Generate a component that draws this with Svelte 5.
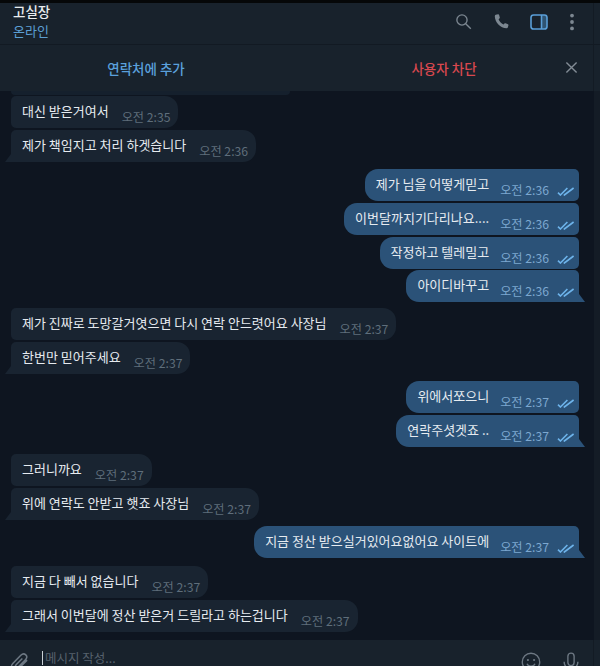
<script>
  // 대화 내용: out = 내가 보낸 메시지, gap = 이전 메시지와의 간격, tail = 꼬리 표시
  const messages = [
    { text: "대신 받은거여서", time: "오전 2:35", gap: 1 },
    { text: "제가 책임지고 처리 하겟습니다", time: "오전 2:36", gap: 2, tail: true },
    { text: "제가 님을 어떻게믿고", time: "오전 2:36", out: true, gap: 7 },
    { text: "이번달까지기다리나요....", time: "오전 2:36", out: true, gap: 2 },
    { text: "작정하고 텔레밀고", time: "오전 2:36", out: true, gap: 2 },
    { text: "아이디바꾸고", time: "오전 2:36", out: true, gap: 1, tail: true },
    { text: "제가 진짜로 도망갈거엿으면 다시 연락 안드렷어요 사장님", time: "오전 2:37", gap: 6 },
    { text: "한번만 믿어주세요", time: "오전 2:37", gap: 2, tail: true },
    { text: "위에서쪼으니", time: "오전 2:37", out: true, gap: 7 },
    { text: "연락주셧겟죠 ..", time: "오전 2:37", out: true, gap: 2, tail: true },
    { text: "그러니까요", time: "오전 2:37", gap: 7 },
    { text: "위에 연락도 안받고 햇죠 사장님", time: "오전 2:37", gap: 2, tail: true },
    { text: "지금 정산 받으실거있어요없어요 사이트에", time: "오전 2:37", out: true, gap: 6, tail: true },
    { text: "지금 다 빼서 없습니다", time: "오전 2:37", gap: 8 },
    { text: "그래서 이번달에 정산 받은거 드릴라고 하는겁니다", time: "오전 2:37", gap: 2, tail: true },
  ];
</script>

<div class="screen">
  <div class="topline"></div>
  <header class="header">
    <div class="peer">
      <div class="name">고실장</div>
      <div class="status">온라인</div>
    </div>
    <div class="actions">
      <svg class="icon search" viewBox="0 0 20 20" aria-hidden="true">
        <circle cx="8.2" cy="8.2" r="6" />
        <path d="M12.6 12.6 L18.6 18.6" />
      </svg>
      <svg class="icon phone" viewBox="0 0 20 20" aria-hidden="true">
        <path class="solid" d="M3.2 2.2 L6 1.6 C6.6 1.5 7 1.8 7.2 2.3 L8 5.2 C8.1 5.7 8 6.1 7.5 6.5 L6.6 7.4 C7.4 10 9.6 12.3 12.4 13.4 L13.5 12.4 C13.9 12 14.3 12 14.8 12.1 L17.6 13.1 C18.1 13.3 18.4 13.8 18.2 14.4 L17.5 16.9 C17.3 17.6 16.8 18 16 18 C8.6 17.6 2.4 11 2.1 3.8 C2.1 3 2.5 2.4 3.2 2.2 Z" />
      </svg>
      <svg class="icon panel" viewBox="0 0 18 16" aria-hidden="true">
        <path class="panel-side" d="M11.5 1 H14.4 A2.6 2.6 0 0 1 17 3.6 V12.4 A2.6 2.6 0 0 1 14.4 15 H11.5 Z" />
        <rect x="1" y="1" width="16" height="14" rx="2.6" />
        <path d="M11.5 1 V15" />
      </svg>
      <svg class="icon more" viewBox="0 0 6 18" aria-hidden="true">
        <circle cx="3" cy="2.6" r="1.9" />
        <circle cx="3" cy="9" r="1.9" />
        <circle cx="3" cy="15.4" r="1.9" />
      </svg>
    </div>
  </header>

  <div class="contact-bar">
    <div class="contact-add">연락처에 추가</div>
    <div class="contact-block">사용자 차단</div>
    <svg class="close" viewBox="0 0 14 14" aria-hidden="true">
      <path d="M1.5 1.5 L12.5 12.5 M12.5 1.5 L1.5 12.5" />
    </svg>
  </div>

  <div class="chat">
    <div class="history">
      <div class="cut-bubble"></div>
      {#each messages as m}
        <div class="row" class:out={m.out} style="margin-top: {m.gap}px">
          <div class="bubble" class:tail={m.tail}>
            <span class="text">{m.text}</span>
            <span class="time">{m.time}</span>
            {#if m.out}
              <svg class="checks" viewBox="0 0 18 9" aria-hidden="true">
                <path d="M1 5.6 L3.4 8 L10.4 1 M6.8 7.4 L7.4 8 L16.6 1" />
              </svg>
            {/if}
          </div>
        </div>
      {/each}
    </div>
    <div class="scroll-strip"></div>
  </div>

  <footer class="composer">
    <svg class="clip" viewBox="0 0 20 22" aria-hidden="true">
      <path d="M18 8.5 L9 17.5 C7 19.5 4 19.6 2.6 18.2 C1 16.6 1.2 13.8 3.2 11.8 L11.4 3.4 C13 1.8 15.2 1.6 16.6 3 C18 4.4 17.8 6.6 16.2 8.2 L8.8 15.6 C8 16.4 6.8 16.4 6.2 15.8 C5.6 15.2 5.7 14.2 6.4 13.4 L13 6.8" />
    </svg>
    <div class="input"><span class="caret"></span>메시지 작성...</div>
    <svg class="smile" viewBox="0 0 22 22" aria-hidden="true">
      <circle cx="11" cy="11" r="9.6" />
      <circle class="eye" cx="7.6" cy="8.8" r="1.2" />
      <circle class="eye" cx="14.4" cy="8.8" r="1.2" />
      <path d="M6.6 13 C8 16.4 14 16.4 15.4 13" />
    </svg>
    <svg class="mic" viewBox="0 0 18 24" aria-hidden="true">
      <rect x="5.6" y="1.2" width="6.8" height="13.6" rx="3.4" />
      <path d="M1.5 10.5 C1.5 15.5 5 18.5 9 18.5 C13 18.5 16.5 15.5 16.5 10.5 M9 18.5 V23" />
    </svg>
  </footer>
</div>

<style>
  :global(body) {
    margin: 0;
    background: #0e1621;
  }

  .screen {
    width: 600px;
    height: 666px;
    overflow: hidden;
    display: flex;
    flex-direction: column;
    background: #0e1520;
    font-family: "Noto Sans CJK KR", "Noto Sans", sans-serif;
    color: #e6ebf0;
  }

  .topline {
    height: 3px;
    background: #050708;
    flex: none;
  }

  .header {
    height: 42px;
    flex: none;
    box-sizing: border-box;
    display: flex;
    align-items: center;
    justify-content: space-between;
    padding: 0 25px 0 13px;
    background: #18222c;
    border-bottom: 1px solid #121a23;
    box-shadow: inset -6px 0 0 #18222c, inset -7px 0 0 #131b24;
  }

  .peer {
    line-height: 19px;
    margin-top: -6px;
  }

  .name {
    font-size: 13.5px;
    font-weight: 500;
    color: #e8ecef;
  }

  .status {
    font-size: 13px;
    color: #5b9ed3;
  }

  .actions {
    display: flex;
    align-items: center;
    margin-top: -4px;
  }

  .icon {
    display: block;
    flex: none;
  }

  .search {
    width: 17px;
    height: 17px;
    fill: none;
    stroke: #7c8791;
    stroke-width: 1.6;
  }

  .phone {
    width: 17px;
    height: 17px;
    margin-left: 21px;
  }

  .solid {
    fill: #7c8791;
  }

  .panel {
    width: 18px;
    height: 16px;
    margin-left: 20px;
    fill: none;
    stroke: #5a9fd8;
    stroke-width: 1.6;
  }

  .panel-side {
    fill: #2f5472;
    stroke: none;
  }

  .more {
    width: 6px;
    height: 18px;
    margin-left: 21px;
    fill: #7c8791;
  }

  .contact-bar {
    position: relative;
    height: 46px;
    flex: none;
    display: flex;
    align-items: center;
    background: #18222c;
    font-size: 13.5px;
    font-weight: 500;
    box-shadow: inset -6px 0 0 #18222c, inset -7px 0 0 #131b24;
  }

  .contact-add {
    width: 292px;
    text-align: center;
    color: #5aa0dc;
  }

  .contact-block {
    width: 304px;
    text-align: center;
    color: #d9484f;
  }

  .close {
    position: absolute;
    top: 16px;
    left: 565px;
    width: 13px;
    height: 13px;
    fill: none;
    stroke: #828c95;
    stroke-width: 1.5;
  }

  .chat {
    flex: 1;
    min-height: 0;
    display: flex;
  }

  .history {
    flex: 1;
    padding: 0 15px 0 11px;
    overflow: hidden;
  }

  .scroll-strip {
    width: 6px;
    background: #141c26;
  }

  .cut-bubble {
    width: 279px;
    height: 4px;
    background: #182533;
    border-radius: 0 0 8px 8px;
    opacity: 0.7;
  }

  .row {
    display: flex;
  }

  .row.out {
    justify-content: flex-end;
  }

  .bubble {
    position: relative;
    height: 32px;
    box-sizing: border-box;
    display: flex;
    padding: 0 8px 0 11px;
    background: #192431;
    border-radius: 13px;
    font-size: 13px;
    line-height: 32px;
    white-space: nowrap;
  }

  .row:not(.out) .bubble {
    border-top-left-radius: 5px;
    border-bottom-left-radius: 5px;
  }

  .row.out .bubble {
    background: #2b5278;
    border-top-right-radius: 5px;
    border-bottom-right-radius: 5px;
    padding-right: 4px;
  }

  .bubble.tail {
    border-bottom-left-radius: 0 !important;
  }

  .row.out .bubble.tail {
    border-bottom-left-radius: 13px !important;
    border-bottom-right-radius: 0;
  }

  .bubble.tail::after {
    content: "";
    position: absolute;
    bottom: 0;
    left: -6px;
    width: 6px;
    height: 8px;
    background: #192431;
    clip-path: polygon(100% 0, 100% 100%, 0 100%);
  }

  .row.out .bubble.tail::after {
    left: auto;
    right: -6px;
    background: #2b5278;
    clip-path: polygon(0 0, 100% 100%, 0 100%);
  }

  .text {
    color: #e6ebf0;
    margin-top: -1px;
  }

  .time {
    margin-left: 13px;
    margin-top: 5px;
    font-size: 12.2px;
    color: #5f6e7b;
  }

  .row.out .text + .time {
    margin-left: 11px;
    color: #7da8d0;
  }

  .checks {
    width: 18px;
    height: 9px;
    margin: 18px 0 0 8px;
    fill: none;
    stroke: #6db3ea;
    stroke-width: 1.6;
  }

  .composer {
    height: 26px;
    flex: none;
    box-sizing: border-box;
    display: flex;
    align-items: flex-start;
    background: #18222c;
    padding: 12px 20px 0 10px;
    box-shadow: inset -6px 0 0 #18222c, inset -7px 0 0 #131b24;
  }

  .clip {
    width: 19px;
    height: 21px;
    fill: none;
    stroke: #6d7883;
    stroke-width: 1.6;
    flex: none;
  }

  .input {
    flex: 1;
    margin: -2px 0 0 13px;
    font-size: 12.5px;
    line-height: 14px;
    height: 16px;
    color: #56616c;
    display: flex;
    align-items: center;
  }

  .caret {
    width: 1px;
    height: 14px;
    margin-right: 2px;
    background: #c9d0d6;
  }

  .smile {
    width: 20px;
    height: 20px;
    fill: none;
    stroke: #6d7883;
    stroke-width: 1.5;
    flex: none;
  }

  .eye {
    fill: #6d7883;
    stroke: none;
  }

  .mic {
    width: 18px;
    height: 22px;
    margin-left: 21px;
    fill: none;
    stroke: #6d7883;
    stroke-width: 1.5;
    flex: none;
  }
</style>
